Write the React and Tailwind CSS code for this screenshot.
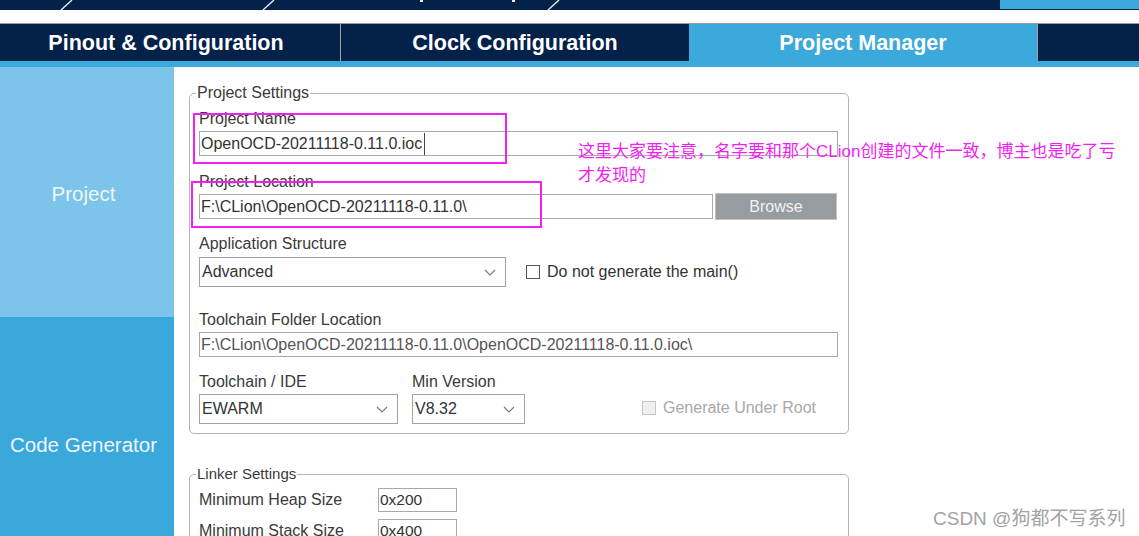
import React from "react";

const ui = { fontFamily: '"Liberation Sans", Arial, sans-serif' };
const cjk = { fontFamily: '"Liberation Sans", "Noto Sans CJK SC", sans-serif' };

function Chevron() {
  return (
    <svg width="12" height="7" viewBox="0 0 12 7" className="shrink-0">
      <polyline points="1,1 6,6 11,1" fill="none" stroke="#777" strokeWidth="1.1" />
    </svg>
  );
}

function Select({ value, className }) {
  return (
    <div
      className={`flex h-[30px] items-center justify-between border border-[#a3a3a3] bg-white pl-[2px] pr-[9px] text-[16px] text-[#333] ${className}`}
    >
      <span>{value}</span>
      <Chevron />
    </div>
  );
}

function Check({ label, disabled }) {
  return (
    <div className="flex items-center gap-[7px]">
      <span
        className={`h-[14px] w-[14px] border ${disabled ? "border-[#c4c4c4] bg-[#efefef]" : "border-[#555] bg-white"}`}
      />
      <span className={`text-[16px] ${disabled ? "text-[#a8a8a8]" : "text-[#333]"}`}>{label}</span>
    </div>
  );
}

function Label({ children, className = "" }) {
  return <div className={`h-4 text-[16px] leading-4 text-[#3a3a3a] ${className}`}>{children}</div>;
}

function Input({ children, className = "", textClass = "text-[#333]" }) {
  return (
    <div
      className={`flex h-[25px] items-center border border-[#a9a9a9] bg-white pl-[1px] text-[16px] whitespace-nowrap ${textClass} ${className}`}
    >
      {children}
    </div>
  );
}

function TopStrip() {
  return (
    <div className="relative h-[10px] bg-[#032149]">
      <svg width="1139" height="10" className="absolute left-0 top-0">
        <line x1="61" y1="10" x2="72" y2="0" stroke="#e8eef5" strokeWidth="1.4" />
        <line x1="263" y1="10" x2="274" y2="0" stroke="#e8eef5" strokeWidth="1.4" />
        <line x1="548" y1="10" x2="559" y2="0" stroke="#e8eef5" strokeWidth="1.4" />
        <rect x="420" y="0" width="3" height="2" fill="#e8eef5" />
        <rect x="512" y="0" width="3" height="2" fill="#e8eef5" />
      </svg>
      <div className="absolute right-0 top-0 h-[9px] w-[139px] bg-[#3ca9dc]" />
    </div>
  );
}

function Tabs() {
  return (
    <div className="flex h-[38px] border-t border-[#9a9a9a] bg-[#032149] pt-[2px] text-[21.5px] font-bold text-white">
      <div className="flex w-[340px] items-center justify-center pr-2">Pinout &amp; Configuration</div>
      <div className="-mt-[2px] w-px bg-[#a0a0a0]" />
      <div className="flex w-[348px] items-center justify-center">Clock Configuration</div>
      <div className="-mt-[2px] flex w-[348px] items-center justify-center bg-[#3ca9dc] pt-[2px]">Project Manager</div>
      <div className="-mt-[2px] w-px bg-[#a0a0a0]" />
      <div className="flex-1" />
    </div>
  );
}

export default function App() {
  return (
    <div className="relative h-[536px] w-[1139px] overflow-hidden bg-white" style={ui}>
      <TopStrip />
      <div className="h-[13px] bg-white" />
      <Tabs />
      <div className="h-[6px] bg-[#3ca9dc]" />

      <div className="flex">
        <aside className="w-[174px] shrink-0 text-[20.5px] text-[#eef7fc]">
          <div className="flex h-[250px] items-center justify-center bg-[#7cc4e9] pr-[7px] pt-[4px]">Project</div>
          <div className="flex h-[260px] items-center justify-center bg-[#3ba8dc] pb-[4px] pr-[7px]">Code Generator</div>
        </aside>

        <main className="flex-1 pl-[15px] pt-[17px]">
          <fieldset className="w-[660px] rounded-[5px] border border-[#b5b5b5] pb-[9px] pl-[9px] pr-[10px]">
            <legend className="ml-[-3px] px-[1px] text-[16px] leading-[18px] text-[#3a3a3a]">Project Settings</legend>

            <Label className="mt-[9px]">Project Name</Label>
            <Input className="mt-[4px]">
              <span>OpenOCD-20211118-0.11.0.ioc</span>
              <span className="ml-[2px] h-[22px] w-px bg-[#444]" />
            </Input>

            <Label className="mt-[18px]">Project Location</Label>
            <div className="mt-[3px] flex items-center gap-[2px]">
              <Input className="w-[514px]">F:\CLion\OpenOCD-20211118-0.11.0\</Input>
              <div className="flex h-[27px] w-[122px] items-center justify-center border border-[#c2c2c2] bg-[#979ca0] text-[16px] text-[#f2f2f2]">
                Browse
              </div>
            </div>

            <Label className="mt-[16px]">Application Structure</Label>
            <div className="mt-[5px] flex items-center gap-[20px]">
              <Select value="Advanced" className="w-[307px]" />
              <Check label="Do not generate the main()" />
            </div>

            <Label className="mt-[25px]">Toolchain Folder Location</Label>
            <Input className="mt-[4px]" textClass="text-[#555]">
              F:\CLion\OpenOCD-20211118-0.11.0\OpenOCD-20211118-0.11.0.ioc\
            </Input>

            <div className="mt-[17px] flex items-end">
              <div className="w-[199px]">
                <Label>Toolchain / IDE</Label>
                <Select value="EWARM" className="mt-[4px] w-[199px]" />
              </div>
              <div className="ml-[14px] w-[113px]">
                <Label>Min Version</Label>
                <Select value="V8.32" className="mt-[4px] w-[113px]" />
              </div>
              <div className="mb-[4px] ml-[117px]">
                <Check label="Generate Under Root" disabled />
              </div>
            </div>
          </fieldset>

          <fieldset className="mt-[31px] w-[660px] rounded-[5px] border border-[#b5b5b5] pl-[9px] pr-[10px] pb-[10px]">
            <legend className="ml-[-3px] px-[1px] text-[15px] leading-[18px] text-[#3a3a3a]">Linker Settings</legend>
            <div className="mt-[5px] flex items-center">
              <span className="w-[179px] text-[16px] text-[#3a3a3a]">Minimum Heap Size</span>
              <div className="flex h-[24px] w-[79px] items-center border border-[#a9a9a9] pl-[1px] text-[15.5px] text-[#333]">0x200</div>
            </div>
            <div className="mt-[7px] flex items-center">
              <span className="w-[179px] text-[16px] text-[#3a3a3a]">Minimum Stack Size</span>
              <div className="flex h-[24px] w-[79px] items-center border border-[#a9a9a9] pl-[1px] text-[15.5px] text-[#333]">0x400</div>
            </div>
          </fieldset>
        </main>
      </div>

      {/* annotations drawn over the screenshot */}
      <div className="absolute left-[193px] top-[113px] h-[51px] w-[314px] border-2 border-[#f51ef5]" />
      <div className="absolute left-[191px] top-[181px] h-[47px] w-[351px] border-2 border-[#f51ef5]" />
      <div className="absolute left-[578px] top-[140px] text-[17px] leading-[24px] text-[#f21ff2]" style={cjk}>
        <div className="whitespace-nowrap">这里大家要注意，名字要和那个CLion创建的文件一致，博主也是吃了亏</div>
        <div className="whitespace-nowrap">才发现的</div>
      </div>
      <div className="absolute left-[933px] top-[505px] whitespace-nowrap text-[19px] text-[#a3a3a3]" style={cjk}>
        CSDN @狗都不写系列
      </div>
    </div>
  );
}
